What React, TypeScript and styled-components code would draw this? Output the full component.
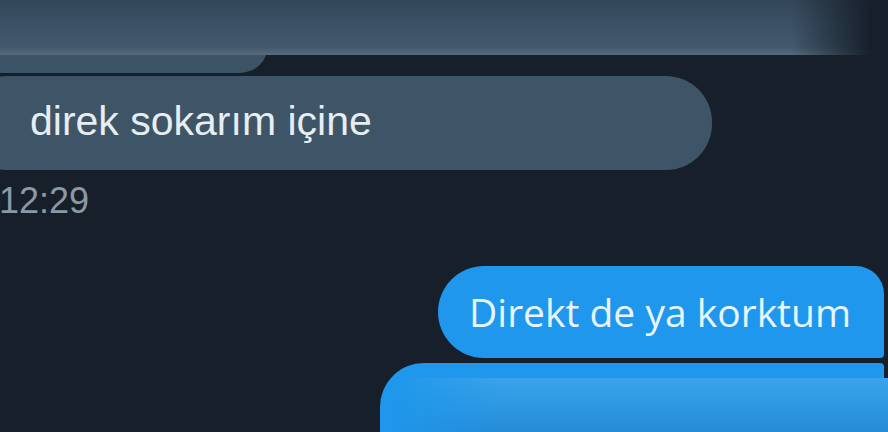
import React from "react";
import styled, { createGlobalStyle } from "styled-components";

const Global = createGlobalStyle`
  html, body { margin: 0; padding: 0; }
  body {
    background: #17202a;
    width: 888px;
    height: 432px;
    overflow: hidden;
    font-family: "Liberation Sans", Arial, sans-serif;
  }
`;

const Screen = styled.div`
  position: relative;
  width: 888px;
  height: 432px;
  overflow: hidden;
  background: #17202a;
  display: flex;
  flex-direction: column;
`;

const TopBlur = styled.div`
  position: absolute;
  left: 0;
  top: 0;
  width: 880px;
  height: 55px;
  background: linear-gradient(to bottom, #33475a 0%, #3c5165 45%, #42586b 85%, #566b7c 100%);
  -webkit-mask-image: linear-gradient(to right, #000 0%, #000 90%, transparent 99%);
  mask-image: linear-gradient(to right, #000 0%, #000 90%, transparent 99%);
`;

const BottomBlur = styled.div`
  position: absolute;
  left: 390px;
  top: 378px;
  width: 498px;
  height: 54px;
  background: linear-gradient(to bottom, #3aa3ea 0%, #2e98e3 50%, #268bd6 100%);
  -webkit-mask-image: linear-gradient(to right, transparent 0%, #000 22%, #000 100%);
  mask-image: linear-gradient(to right, transparent 0%, #000 22%, #000 100%);
`;

const PrevBubble = styled.div`
  width: 288px;
  height: 73px;
  margin-left: -20px;
  background: #3d5366;
  border-radius: 0 0 28px 0;
  flex-shrink: 0;
`;

const IncomingBubble = styled.div`
  margin-top: 3px;
  margin-left: -40px;
  width: 752px;
  height: 94px;
  box-sizing: border-box;
  padding-left: 70px;
  background: #3e5467;
  border-radius: 46px;
  display: flex;
  align-items: center;
  flex-shrink: 0;
`;

const IncomingText = styled.span`
  font-family: "Liberation Sans", Arial, sans-serif;
  font-size: 41px;
  color: #e7edf1;
  line-height: 1;
  padding-bottom: 4px;
`;

const Time = styled.div`
  margin-top: 13px;
  margin-left: -1px;
  font-family: "Liberation Sans", Arial, sans-serif;
  font-size: 36px;
  line-height: 1;
  color: #8b99a6;
  flex-shrink: 0;
`;

const OutgoingGroup = styled.div`
  margin-top: 47px;
  display: flex;
  flex-direction: column;
  align-items: flex-end;
  gap: 5px;
  padding-right: 4px;
`;

const OutgoingBubble = styled.div`
  width: 446px;
  height: 92px;
  box-sizing: border-box;
  background: #1f97ec;
  border-radius: 46px 28px 4px 46px;
  display: flex;
  align-items: center;
  padding-left: 31px;
  flex-shrink: 0;
`;

const OutgoingText = styled.span`
  font-family: "Open Sans", "Liberation Sans", sans-serif;
  font-size: 39px;
  line-height: 1;
  color: #e6f5ff;
  padding-bottom: 2px;
`;

const NextBubble = styled.div`
  width: 504px;
  height: 80px;
  background: #1f97ec;
  border-radius: 44px 4px 4px 4px;
  flex-shrink: 0;
`;

export default function App() {
  return (
    <Screen>
      <Global />
      <PrevBubble />
      <IncomingBubble>
        <IncomingText>direk sokarım içine</IncomingText>
      </IncomingBubble>
      <Time>12:29</Time>
      <OutgoingGroup>
        <OutgoingBubble>
          <OutgoingText>Direkt de ya korktum</OutgoingText>
        </OutgoingBubble>
        <NextBubble />
      </OutgoingGroup>
      <TopBlur />
      <BottomBlur />
    </Screen>
  );
}
